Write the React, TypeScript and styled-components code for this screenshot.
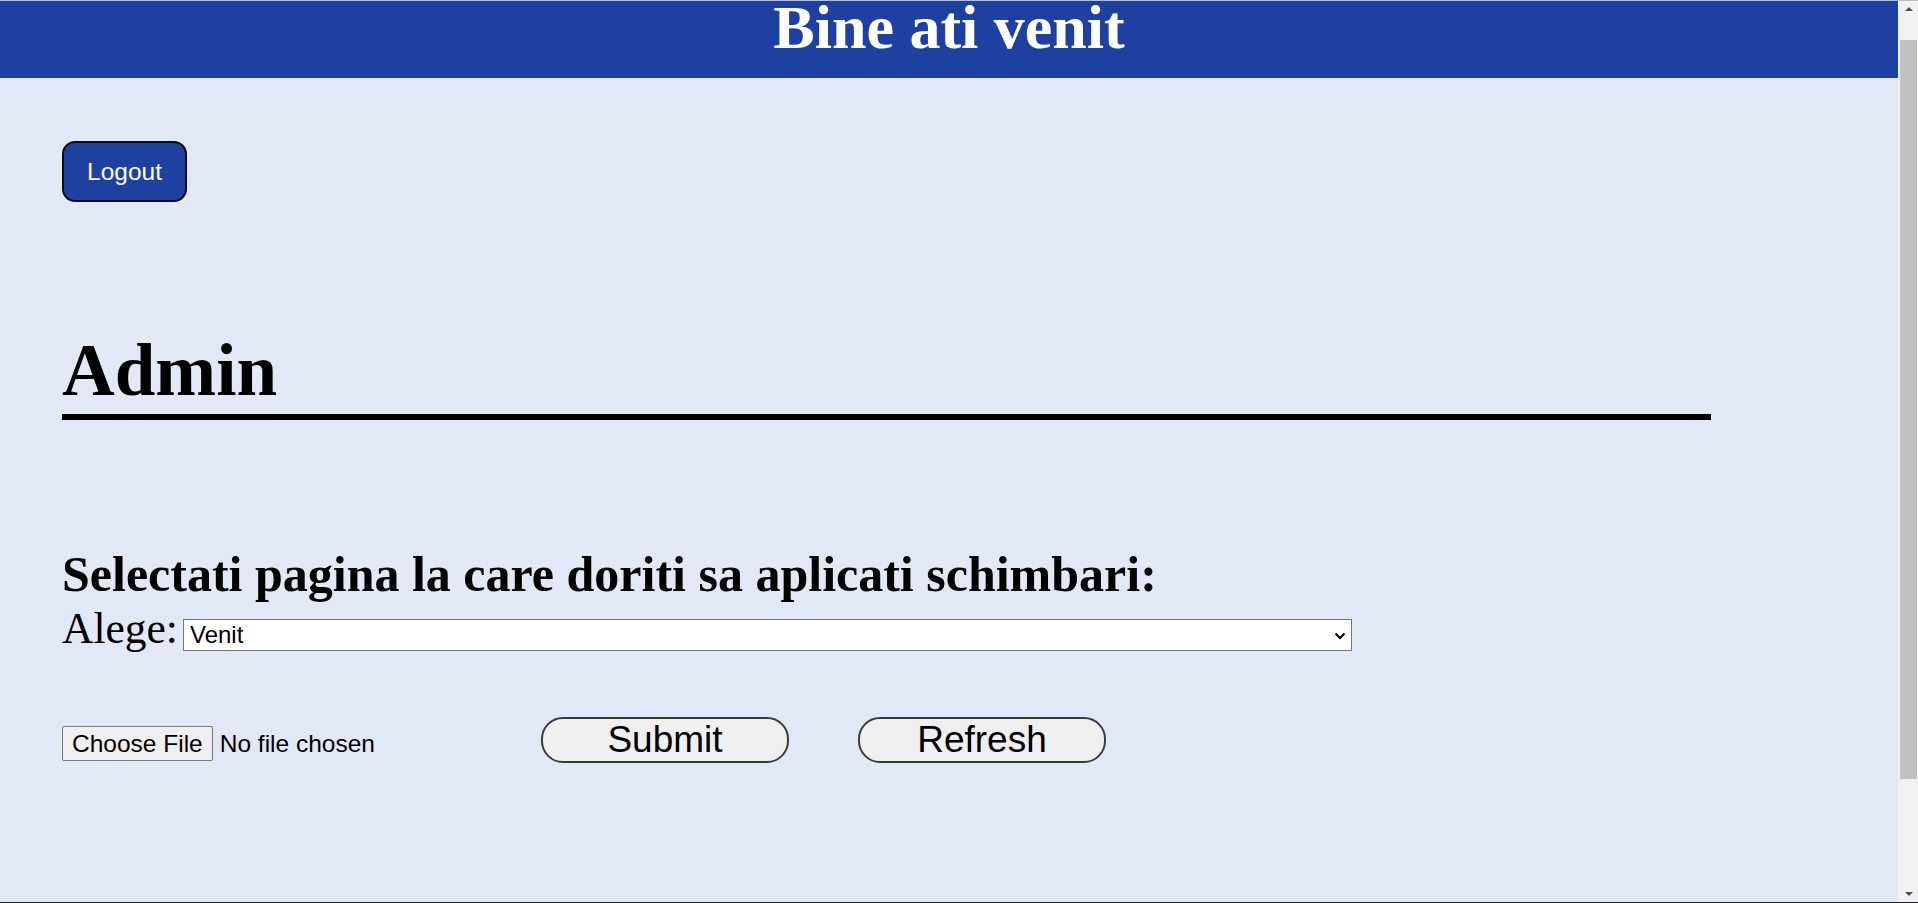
import React from "react";
import styled, { createGlobalStyle } from "styled-components";

const SERIF = `"Liberation Serif", "Times New Roman", serif`;
const SANS = `"Liberation Sans", Arial, sans-serif`;

const GlobalStyle = createGlobalStyle`
  html, body {
    margin: 0;
    padding: 0;
    height: 100%;
    overflow: hidden;
  }
  body {
    font-family: ${SERIF};
    background: #e2e8f5;
  }
`;

const Root = styled.div`
  display: flex;
  height: 100vh;
  box-sizing: border-box;
  border-top: 1px solid #bdbdbd;
  border-bottom: 1px solid #1f1f2e;
  overflow: hidden;
`;

const Page = styled.div`
  flex: 1;
  min-width: 0;
  display: flex;
  flex-direction: column;
  background: #e2e8f5;
`;

const Header = styled.header`
  height: 77px;
  flex-shrink: 0;
  background: #1e40a0;
  display: flex;
  justify-content: center;
  align-items: flex-start;
`;

const Title = styled.h1`
  margin: 0;
  font-family: ${SERIF};
  font-weight: bold;
  font-size: 62px;
  line-height: 52px;
  color: #ffffff;
  white-space: nowrap;
`;

const Main = styled.main`
  padding-left: 62px;
  display: flex;
  flex-direction: column;
  align-items: flex-start;
`;

const LogoutButton = styled.button`
  margin-top: 63px;
  width: 125px;
  height: 61px;
  box-sizing: border-box;
  padding: 0;
  border: 2px solid #0d0d0d;
  border-radius: 13px;
  background: #1e40a0;
  color: #ffffff;
  font-family: ${SANS};
  font-size: 24.5px;
  display: flex;
  align-items: center;
  justify-content: center;
  cursor: pointer;
`;

const AdminTitle = styled.h2`
  margin: 132px 0 0;
  width: 1649px;
  padding-bottom: 7px;
  border-bottom: 6px solid #000000;
  font-family: ${SERIF};
  font-weight: bold;
  font-size: 73px;
  line-height: 73px;
  color: #000000;
`;

const SectionTitle = styled.h3`
  margin: 129px 0 0;
  font-family: ${SERIF};
  font-weight: bold;
  font-size: 50px;
  line-height: 50px;
  color: #000000;
  white-space: nowrap;
`;

const PickRow = styled.div`
  margin-top: 8px;
  display: flex;
  align-items: baseline;
`;

const PickLabel = styled.label`
  font-family: ${SERIF};
  font-size: 43.5px;
  line-height: 43px;
  color: #000000;
`;

const SelectWrap = styled.span`
  position: relative;
  display: inline-flex;
  margin-left: 5px;
`;

const Select = styled.select`
  appearance: none;
  -webkit-appearance: none;
  width: 1169px;
  height: 32px;
  box-sizing: border-box;
  margin: 0;
  padding: 0 30px 0 6px;
  border: 1px solid #767676;
  border-radius: 0;
  background: #ffffff;
  color: #000000;
  font-family: ${SANS};
  font-size: 24px;
`;

const Chevron = styled.svg`
  position: absolute;
  right: 6px;
  top: 13px;
  width: 12px;
  height: 8px;
  pointer-events: none;
`;

const ActionRow = styled.div`
  margin-top: 66px;
  display: flex;
  align-items: baseline;
`;

const FilePicker = styled.label`
  width: 479px;
  display: inline-flex;
  align-items: baseline;
  gap: 7px;
  font-family: ${SANS};
  font-size: 24.5px;
  color: #000000;
  cursor: pointer;
`;

const HiddenInput = styled.input`
  display: none;
`;

const FileButton = styled.span`
  display: inline-block;
  box-sizing: border-box;
  height: 35px;
  line-height: 33px;
  padding: 0 9px;
  border: 1px solid #767676;
  border-radius: 2px;
  background: #efefef;
`;

const FileName = styled.span`
  line-height: 33px;
`;

const ActionButton = styled.button<{ $offset?: number }>`
  width: 248px;
  height: 46px;
  box-sizing: border-box;
  margin-left: ${(p) => p.$offset ?? 0}px;
  padding: 0;
  border: 2px solid #3c3c3c;
  border-radius: 22px;
  background: #efefef;
  color: #000000;
  font-family: ${SANS};
  font-size: 37px;
  line-height: 42px;
  cursor: pointer;
`;

const Scrollbar = styled.div`
  width: 20px;
  flex-shrink: 0;
  background: #f1f1f1;
  display: flex;
  flex-direction: column;
`;

const ScrollArrow = styled.div`
  height: 16px;
  flex-shrink: 0;
  display: flex;
  align-items: center;
  justify-content: center;
  padding-left: 1px;
`;

const Triangle = styled.span<{ $down?: boolean }>`
  width: 0;
  height: 0;
  border-left: 4px solid transparent;
  border-right: 4px solid transparent;
  ${(p) =>
    p.$down
      ? "border-top: 4px solid #505050;"
      : "border-bottom: 4px solid #505050;"}
`;

const ScrollTrack = styled.div`
  flex: 1;
  display: flex;
  flex-direction: column;
`;

const Thumb = styled.div`
  margin: 23px 1px 0 2px;
  height: 739px;
  background: #c1c1c1;
`;

export default function App() {
  return (
    <>
      <GlobalStyle />
      <Root>
        <Page>
          <Header>
            <Title>Bine ati venit</Title>
          </Header>
          <Main>
            <LogoutButton type="button">Logout</LogoutButton>
            <AdminTitle>Admin</AdminTitle>
            <SectionTitle>Selectati pagina la care doriti sa aplicati schimbari:</SectionTitle>
            <PickRow>
              <PickLabel htmlFor="pagina">Alege:</PickLabel>
              <SelectWrap>
                <Select id="pagina" defaultValue="venit">
                  <option value="venit">Venit</option>
                  <option value="admin">Admin</option>
                </Select>
                <Chevron viewBox="0 0 12 8" aria-hidden="true">
                  <path d="M1.5 1.5 L6 6 L10.5 1.5" fill="none" stroke="#000" strokeWidth="2" />
                </Chevron>
              </SelectWrap>
            </PickRow>
            <ActionRow>
              <FilePicker>
                <HiddenInput type="file" />
                <FileButton>Choose File</FileButton>
                <FileName>No file chosen</FileName>
              </FilePicker>
              <ActionButton type="submit">Submit</ActionButton>
              <ActionButton type="button" $offset={69}>Refresh</ActionButton>
            </ActionRow>
          </Main>
        </Page>
        <Scrollbar>
          <ScrollArrow>
            <Triangle />
          </ScrollArrow>
          <ScrollTrack>
            <Thumb />
          </ScrollTrack>
          <ScrollArrow>
            <Triangle $down />
          </ScrollArrow>
        </Scrollbar>
      </Root>
    </>
  );
}
